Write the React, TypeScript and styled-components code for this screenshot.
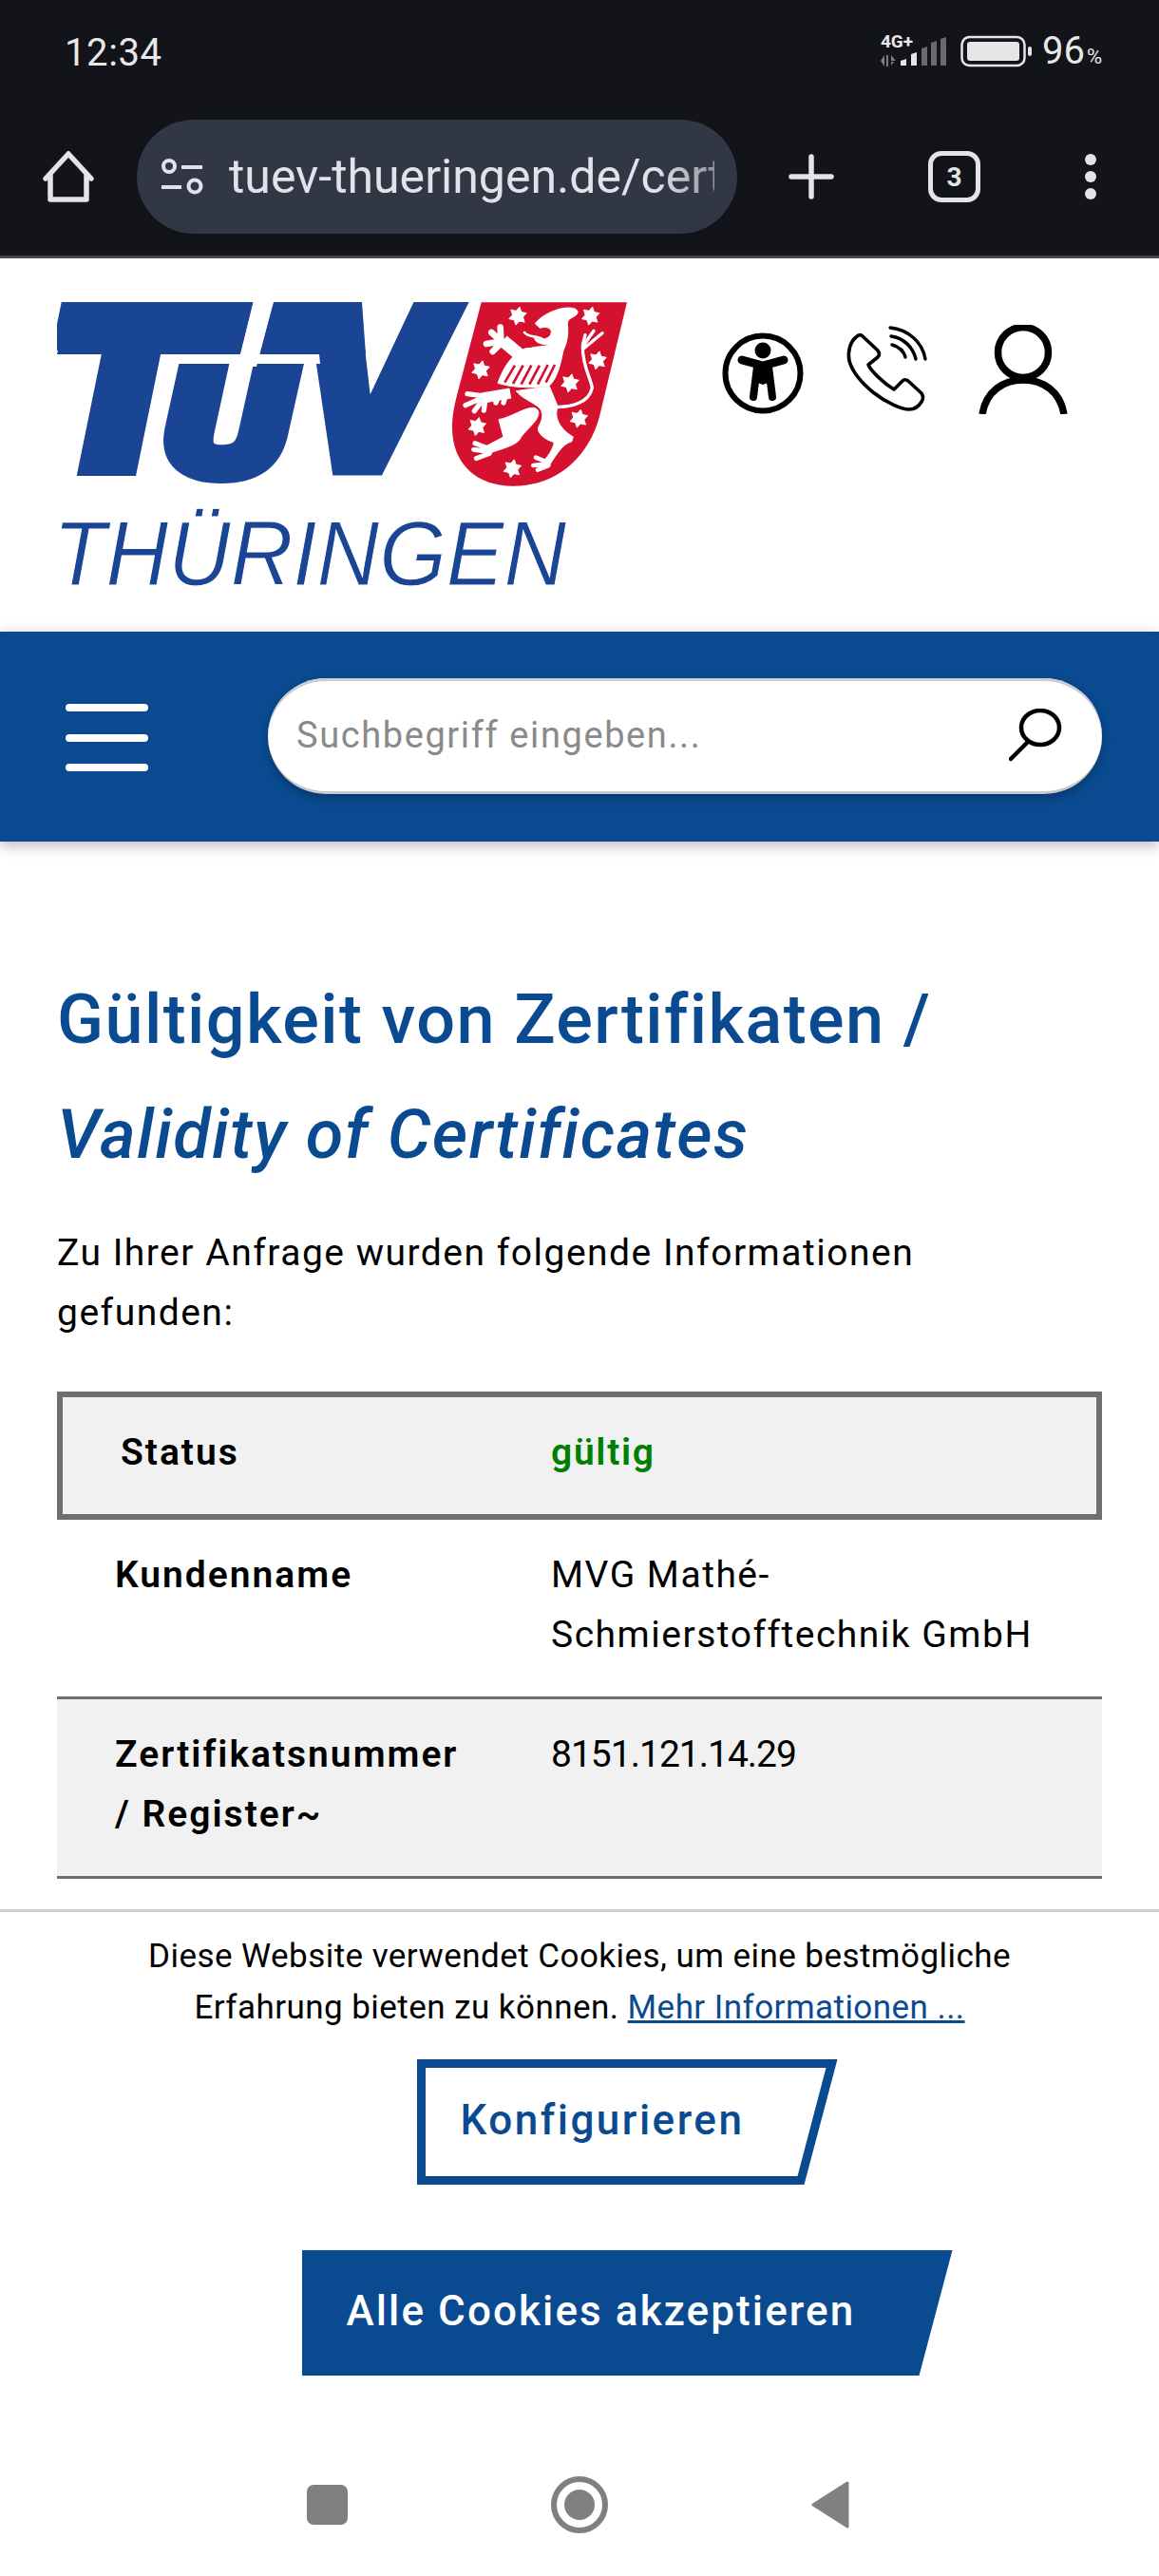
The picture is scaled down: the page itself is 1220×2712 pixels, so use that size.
import styled, { createGlobalStyle } from "styled-components";

const BLUE = "#0a4a90";
const LOGO_BLUE = "#1a4494";
const FONT = `Roboto, "Liberation Sans", sans-serif`;

const GlobalStyle = createGlobalStyle`
  html, body {
    margin: 0;
    padding: 0;
    width: 1220px;
    height: 2712px;
    overflow: hidden;
    background: #fff;
  }
  * { box-sizing: border-box; }
`;

const Star = ({ x, y, r = 29 }: { x: number; y: number; r?: number }) => {
  const tri = (offset: number) =>
    [0, 1, 2]
      .map((i) => {
        const a = ((offset + i * 120 + 12) * Math.PI) / 180;
        return `${x + r * Math.sin(a)},${y - r * Math.cos(a)}`;
      })
      .join(" ");
  return (
    <>
      <polygon points={tri(0)} />
      <polygon points={tri(60)} />
    </>
  );
};

// griffin coords are taken from a 3x crop of the logo, so the group is scaled back down
const Griffin = () => (
  <g fill="#fff" stroke="#fff" strokeWidth="3">
    <Star x={285} y={98} />
    <Star x={515} y={98} />
    <Star x={168} y={268} />
    <Star x={537} y={238} />
    <Star x={450} y={310} />
    <Star x={157} y={447} />
    <Star x={478} y={422} />
    <Star x={268} y={580} />
    {/* head and neck */}
    <path d="M340 122C360 95 410 72 445 72C472 72 482 85 468 96C452 108 442 105 442 125C446 160 440 185 425 215L300 208C340 190 370 197 388 188C360 190 340 182 338 168C360 175 388 172 391 150C392 135 375 130 355 136Z" />
    <path d="M306 150C318 166 345 160 362 171" fill="none" strokeWidth="8" strokeLinecap="round" />
    {/* raised foreleg */}
    <path d="M288 218L238 176" fill="none" strokeWidth="40" />
    <path d="M232 172L230 134M226 172L202 150M222 180L186 186M228 188L206 210" fill="none" strokeWidth="20" strokeLinecap="round" />
    {/* chest with the stripes */}
    <path d="M222 310C240 260 268 215 310 200L430 198C420 260 405 300 385 318C340 326 270 326 222 310Z" />
    <path d="M244 308L276 254M270 312L302 254M296 314L328 254M322 314L354 254M348 314L380 252M374 308L402 252" fill="none" stroke="#d4122f" strokeWidth="8" />
    {/* lower foreleg */}
    <path d="M262 342L170 358" fill="none" strokeWidth="34" />
    <path d="M172 350L126 344M170 358L120 380M174 364L148 398M182 366L178 396M220 362L216 372M244 358L240 372" fill="none" strokeWidth="16" strokeLinecap="round" />
    {/* hind quarters */}
    <path d="M280 335L385 320L412 385C400 410 410 450 460 480L455 495C430 500 410 530 385 570L352 570C380 545 396 520 400 497C375 490 345 470 350 450C360 430 370 410 355 390C335 370 300 360 280 335Z" />
    <path d="M342 545L378 560M334 570L372 566M348 584L382 570" fill="none" strokeWidth="14" strokeLinecap="round" />
    {/* hind leg */}
    <path d="M225 425C260 420 310 385 335 388C355 392 355 410 340 430C320 455 300 470 290 490C270 510 240 515 200 530L172 516L240 480Z" />
    <path d="M196 518L150 500M190 526L146 520M196 532L154 548" fill="none" strokeWidth="15" strokeLinecap="round" />
    {/* tail */}
    <path d="M405 386C460 386 510 370 520 325C515 290 490 260 490 195M490 195L525 145M494 200L552 152M490 190L498 158" fill="none" strokeWidth="10" strokeLinecap="round" />
  </g>
);

const TuevLogo = () => (
  <LogoSvg viewBox="60 318 600 310" width="600" height="310">
    <g fill={LOGO_BLUE} stroke={LOGO_BLUE} strokeLinejoin="miter">
      <LogoLetter x={0} y={0} strokeWidth="26" transform="translate(54 488) scale(1.05 1)" fontSize="228">
        T
      </LogoLetter>
      <LogoLetter x={0} y={0} strokeWidth="24" transform="translate(176 496) scale(1.16 1)" fontSize="148">
        U
      </LogoLetter>
      <LogoLetter x={0} y={0} strokeWidth="25" transform="translate(319 488) scale(0.92 1)" fontSize="230">
        V
      </LogoLetter>
      {/* the two bars that sit over the U like an umlaut */}
      <polygon points="74,318 267,318 253,373 60,373" stroke="none" />
      <polygon points="288,318 381,318 385,373 273,373" stroke="none" />
    </g>
    <g fill="#fff">
      <polygon points="267,316 288,316 270,386 250,386" />
      <polygon points="178,373 336,373 337,383 176,383" />
    </g>
    <g transform="translate(450 300) scale(0.3333)">
      <path
        d="M170 55H630L548 395C520 530 420 635 270 635C150 635 78 560 78 450C78 420 82 395 90 360Z"
        fill="#d4122f"
      />
      <Griffin />
    </g>
    <LogoName x={56} y={616} textLength={540} lengthAdjust="spacingAndGlyphs">
      THÜRINGEN
    </LogoName>
  </LogoSvg>
);

export default function App() {
  return (
    <Page>
      <GlobalStyle />
      <BrowserTop>
        <StatusBar>
          <Clock>12:34</Clock>
          <StatusRight>
            <NetworkIcon>
              <NetworkLabel>4G+</NetworkLabel>
              <svg width="70" height="34" viewBox="0 0 70 34">
                <path d="M0 27l4-6v12zM6 21h2v12H6zM11 21l5 6h-5zM11 28h3l-3 4z" fill="#7d7d80" />
                <path d="M21 32v-5l6-2v7zM32 32V20l6-2v14z" fill="#e6e6e6" />
                <path d="M43 32V14l6-2v20zM53 32V8l6-2v26zM63 32V4l6-2v30z" fill="#6a6a6d" />
              </svg>
            </NetworkIcon>
            <svg width="76" height="34" viewBox="0 0 76 34">
              <rect x="1.5" y="2" width="66" height="30" rx="8" fill="none" stroke="#e6e6e6" strokeWidth="2.5" />
              <rect x="7" y="7" width="55" height="20" rx="3" fill="#e6e6e6" />
              <rect x="71" y="12" width="4" height="10" rx="2" fill="#e6e6e6" />
            </svg>
            <Battery>
              96<small>%</small>
            </Battery>
          </StatusRight>
        </StatusBar>
        <ToolBar>
          <svg width="54" height="54" viewBox="0 0 54 54" fill="none" stroke="#e3e4e9" strokeWidth="5.5" strokeLinejoin="round" strokeLinecap="round">
            <path d="M27 3L3 29M27 3L51 29M8 24V51H46V24" />
          </svg>
          <UrlPill>
            <svg width="44" height="38" viewBox="0 0 44 38" fill="none" stroke="#e2e3e9" strokeWidth="4">
              <circle cx="8" cy="8" r="6" />
              <path d="M21 9H43M0 30H21" />
              <circle cx="35" cy="29" r="6.5" />
            </svg>
            <UrlText>tuev-thueringen.de/certificate</UrlText>
          </UrlPill>
          <PlusIcon viewBox="0 0 48 48" width="48" height="48" stroke="#e3e4e9" strokeWidth="5.5" strokeLinecap="round">
            <path d="M24 3V45M3 24H45" />
          </PlusIcon>
          <TabCount>3</TabCount>
          <MoreDots>
            <span />
            <span />
            <span />
          </MoreDots>
        </ToolBar>
      </BrowserTop>
      <SiteHeader>
        <TuevLogo />
        <HeaderIcons>
          <A11ySvg width="86" height="86" viewBox="0 0 86 86">
            <circle cx="43" cy="43" r="39.5" fill="none" stroke="#000" strokeWidth="6" />
            <circle cx="43" cy="19" r="8.5" />
            <path d="M21 29L43 35L65 29" fill="none" stroke="#000" strokeWidth="9" strokeLinecap="round" strokeLinejoin="round" />
            <path d="M37 36H49L53 68M37 36L33 68" fill="none" stroke="#000" strokeWidth="8" strokeLinecap="round" strokeLinejoin="round" />
            <path d="M37 34H49L51 52L43 55L35 52Z" />
          </A11ySvg>
          <PhoneSvg viewBox="190 44 90 92" width="90" height="92" fill="none" stroke="#000" strokeLinecap="round" strokeLinejoin="round">
            <path
              d="M202 57C205 54 207 54 209 56L225 71C227 74 227 76 225 78L215 86C218 93 232 106 242 112L251 103C253 101 256 102 258 104L271 116C273 119 273 122 271 125C268 130 264 133 258 133C250 133 234 126 220 115C208 105 198 93 195 82C193 72 196 62 202 57Z"
              strokeWidth="3.6"
            />
            <path d="M238 47C257 49 272 62 275 80M239 56C252 58 262 67 265 80M240 65C247 67 252 71 254 78" strokeWidth="3.4" />
          </PhoneSvg>
          <UserSvg viewBox="0 0 94 94" width="94" height="94" fill="none" stroke="#000" strokeWidth="7.5">
            <circle cx="47" cy="29" r="26.5" />
            <path d="M4 94C8 70 26 58 47 58C68 58 86 70 90 94" />
          </UserSvg>
        </HeaderIcons>
      </SiteHeader>
      <NavBand>
        <Burger>
          <span />
          <span />
          <span />
        </Burger>
        <SearchBox>
          <SearchPlaceholder>Suchbegriff eingeben...</SearchPlaceholder>
          <svg width="56" height="56" viewBox="0 0 56 56" fill="none" stroke="#000" strokeWidth="4.5" strokeLinecap="round">
            <ellipse cx="33" cy="20" rx="20" ry="18" />
            <path d="M20 35L2 53" />
          </svg>
        </SearchBox>
      </NavBand>
      <Main>
        <Heading>
          Gültigkeit von Zertifikaten /<br />
          <em>Validity of Certificates</em>
        </Heading>
        <Intro>
          Zu Ihrer Anfrage wurden folgende Informationen
          <br />
          gefunden:
        </Intro>
        <StatusRow>
          <Label>Status</Label>
          <Valid>gültig</Valid>
        </StatusRow>
        <Row>
          <Label>Kundenname</Label>
          <Value>
            MVG Mathé-
            <br />
            Schmierstofftechnik GmbH
          </Value>
        </Row>
        <Row $shaded>
          <Label>
            Zertifikatsnummer
            <br />/ Register~
          </Label>
          <CertNumber>8151.121.14.29</CertNumber>
        </Row>
      </Main>
      <CookieBanner>
        <CookieText>
          Diese Website verwendet Cookies, um eine bestmögliche
          <br />
          Erfahrung bieten zu können. <CookieLink>Mehr Informationen ...</CookieLink>
        </CookieText>
        <ConfigButton>
          <ConfigInner>Konfigurieren</ConfigInner>
        </ConfigButton>
        <AcceptButton>Alle Cookies akzeptieren</AcceptButton>
      </CookieBanner>
      <SystemNav>
        <NavSquare />
        <svg width="60" height="60" viewBox="0 0 60 60">
          <circle cx="30" cy="30" r="27" fill="none" stroke="#808080" strokeWidth="6" />
          <circle cx="30" cy="30" r="16" fill="#808080" />
        </svg>
        <svg width="40" height="50" viewBox="0 0 40 50">
          <path d="M38 2V48L2 25Z" fill="#808080" stroke="#808080" strokeWidth="3" strokeLinejoin="round" />
        </svg>
      </SystemNav>
    </Page>
  );
}

const Page = styled.div`
  width: 1220px;
  height: 2712px;
  display: flex;
  flex-direction: column;
  overflow: hidden;
  font-family: ${FONT};
  background: #fff;
  color: #000;
`;

const BrowserTop = styled.div`
  height: 272px;
  background: #13141a;
  border-bottom: 3px solid #45474f;
  flex: none;
`;

const StatusBar = styled.div`
  height: 126px;
  padding: 34px 60px 0 68px;
  display: flex;
  justify-content: space-between;
  align-items: flex-start;
`;

const Clock = styled.div`
  font-size: 40px;
  line-height: 44px;
  letter-spacing: 0.6px;
  color: #e8e8e8;
`;

const StatusRight = styled.div`
  display: flex;
  align-items: center;
  gap: 10px;
  height: 40px;
`;

const NetworkIcon = styled.div`
  position: relative;
  width: 70px;
  height: 34px;
  margin-right: 4px;
`;

const NetworkLabel = styled.span`
  position: absolute;
  left: 0;
  top: -2px;
  font-size: 19px;
  line-height: 18px;
  font-weight: 700;
  color: #e8e8e8;
`;

const Battery = styled.div`
  padding-top: 5px;
  font-size: 40px;
  line-height: 44px;
  color: #e8e8e8;
  small {
    font-size: 22px;
    margin-left: 2px;
  }
`;

const ToolBar = styled.div`
  height: 120px;
  padding-left: 45px;
  display: flex;
  align-items: center;
`;

const UrlPill = styled.div`
  margin-left: 45px;
  width: 632px;
  height: 120px;
  border-radius: 60px;
  background: #323746;
  padding: 0 24px 0 26px;
  display: flex;
  align-items: center;
  gap: 27px;
  overflow: hidden;
  flex: none;
`;

const UrlText = styled.div`
  font-size: 50px;
  color: #e2e3e9;
  white-space: nowrap;
  overflow: hidden;
  flex: 1;
  mask-image: linear-gradient(to right, #000 88%, rgba(0, 0, 0, 0.55) 100%);
`;

const PlusIcon = styled.svg`
  margin-left: 54px;
  flex: none;
`;

const TabCount = styled.div`
  margin-left: 99px;
  width: 55px;
  height: 54px;
  border: 5.5px solid #e3e4e9;
  border-radius: 14px;
  color: #e3e4e9;
  font-size: 28px;
  font-weight: 700;
  display: flex;
  align-items: center;
  justify-content: center;
  flex: none;
`;

const MoreDots = styled.div`
  margin-left: 110px;
  width: 12px;
  height: 48px;
  display: flex;
  flex-direction: column;
  justify-content: space-between;
  flex: none;
  span {
    display: block;
    width: 12px;
    height: 12px;
    border-radius: 50%;
    background: #e3e4e9;
  }
`;

const SiteHeader = styled.div`
  height: 393px;
  flex: none;
  display: flex;
  align-items: flex-start;
  padding: 46px 0 0 60px;
`;

const LogoSvg = styled.svg`
  flex: none;
`;

const LogoLetter = styled.text`
  font-family: "Liberation Sans", Arial, sans-serif;
  font-weight: 700;
  font-style: italic;
`;

const LogoName = styled.text`
  font-family: "Liberation Sans", Arial, sans-serif;
  font-style: italic;
  font-size: 97px;
  fill: ${LOGO_BLUE};
  stroke: #fff;
  stroke-width: 1.1px;
`;

const HeaderIcons = styled.div`
  margin-left: 100px;
  margin-top: 24px;
  display: flex;
  align-items: flex-start;
`;

const A11ySvg = styled.svg`
  margin-top: 8px;
`;

const PhoneSvg = styled.svg`
  margin-left: 43px;
`;

const UserSvg = styled.svg`
  margin-left: 51px;
`;

const NavBand = styled.div`
  height: 221px;
  flex: none;
  background: ${BLUE};
  box-shadow: 0 4px 14px rgba(0, 0, 0, 0.28);
  padding: 49px 60px 0 69px;
  display: flex;
  align-items: flex-start;
  position: relative;
`;

const Burger = styled.div`
  width: 87px;
  height: 71px;
  margin-top: 27px;
  display: flex;
  flex-direction: column;
  justify-content: space-between;
  span {
    display: block;
    height: 8px;
    border-radius: 4px;
    background: #fff;
  }
`;

const SearchBox = styled.div`
  margin-left: 126px;
  flex: 1;
  height: 122px;
  border-radius: 61px;
  background: #fff;
  border-bottom: 3px solid #c7c8cc;
  box-shadow: 0 4px 10px rgba(0, 0, 0, 0.25), inset 0 3px 0 #c9cbd0;
  padding: 0 42px 0 30px;
  display: flex;
  align-items: center;
  justify-content: space-between;
`;

const SearchPlaceholder = styled.div`
  font-size: 38px;
  letter-spacing: 1.6px;
  color: #8a8a8a;
`;

const Main = styled.div`
  flex: 1;
  min-height: 0;
  overflow: hidden;
  padding: 127px 60px 0;
`;

const Heading = styled.h1`
  margin: 0;
  font-size: 72px;
  line-height: 121px;
  font-weight: 500;
  letter-spacing: 1.4px;
  color: ${BLUE};
  em {
    font-style: italic;
  }
`;

const Intro = styled.p`
  margin: 33px 0 51px;
  font-size: 39px;
  line-height: 63px;
  letter-spacing: 1.5px;
`;

const StatusRow = styled.div`
  height: 135px;
  background: #f1f1f1;
  border: 6px solid #6f6f6f;
  padding: 27px 0 0 61px;
  display: grid;
  grid-template-columns: 453px 1fr;
  font-size: 39px;
  line-height: 63px;
`;

const Row = styled.div<{ $shaded?: boolean }>`
  background: ${({ $shaded }) => ($shaded ? "#f1f1f1" : "#fff")};
  border-bottom: 3px solid #6f6f6f;
  padding: 27px 0 33px 61px;
  display: grid;
  grid-template-columns: 459px 1fr;
  font-size: 39px;
  line-height: 63px;
  letter-spacing: 1.5px;
`;

const Label = styled.div`
  font-weight: 600;
  letter-spacing: 2px;
`;

const Value = styled.div``;

const CertNumber = styled.div`
  letter-spacing: -1px;
`;

const Valid = styled.div`
  font-weight: 600;
  letter-spacing: 1.7px;
  color: #008000;
`;

const CookieBanner = styled.div`
  height: 552px;
  flex: none;
  border-top: 3px solid #ccc;
  padding-top: 20px;
  display: flex;
  flex-direction: column;
  align-items: center;
`;

const CookieText = styled.div`
  font-size: 35px;
  line-height: 54px;
  letter-spacing: 0.45px;
  text-align: center;
`;

const CookieLink = styled.a`
  color: ${BLUE};
  text-decoration: underline;
`;

const ConfigButton = styled.div`
  margin: 27px 0 0 100px;
  width: 443px;
  height: 132px;
  padding: 9px 12px 9px 9px;
  background: ${BLUE};
  clip-path: polygon(0 0, 100% 0, calc(100% - 35px) 100%, 0 100%);
`;

const ConfigInner = styled.div`
  height: 100%;
  background: #fff;
  padding: 0 0 4px 37px;
  display: flex;
  align-items: center;
  color: ${BLUE};
  font-size: 44px;
  font-weight: 500;
  letter-spacing: 2.5px;
  clip-path: polygon(0 0, 100% 0, calc(100% - 30px) 100%, 0 100%);
`;

const AcceptButton = styled.div`
  margin: 69px 0 0 100px;
  width: 685px;
  height: 132px;
  padding: 0 0 4px 47px;
  background: ${BLUE};
  color: #fff;
  font-size: 44px;
  font-weight: 500;
  letter-spacing: 2.1px;
  display: flex;
  align-items: center;
  clip-path: polygon(0 0, 100% 0, calc(100% - 35px) 100%, 0 100%);
`;

const SystemNav = styled.div`
  height: 150px;
  flex: none;
  padding: 0 0 0 323px;
  display: flex;
  align-items: center;
  gap: 214px;
`;

const NavSquare = styled.div`
  width: 43px;
  height: 42px;
  border-radius: 7px;
  background: #808080;
`;
